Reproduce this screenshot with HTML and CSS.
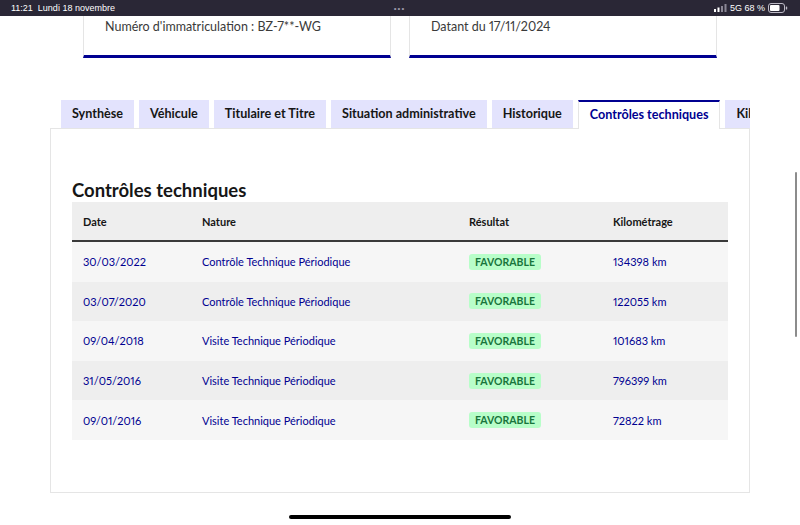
FILE: index.html
```html
<!DOCTYPE html>
<html lang="fr">
<head>
    <meta charset="UTF-8">
    <title>Contrôles techniques</title>
    <link rel="stylesheet" href="styles.css">
</head>
<body>
    <div class="status-bar">
        <div class="status-left">11:21&nbsp;&nbsp;Lundi 18 novembre</div>
        <div class="status-dots">•••</div>
        <div class="status-right">
            <svg width="13" height="8" viewBox="0 0 13 8">
                <rect x="0" y="5" width="2" height="3" fill="#fff"/>
                <rect x="3.5" y="3.5" width="2" height="4.5" fill="#fff"/>
                <rect x="7" y="2" width="2" height="6" fill="#8a8795"/>
                <rect x="10.5" y="0" width="2" height="8" fill="#8a8795"/>
            </svg>
            <span>5G 68 %</span>
            <svg width="20" height="10" viewBox="0 0 20 10">
                <rect x="0.5" y="0.5" width="16" height="9" rx="2.5" fill="none" stroke="#bdbac6"/>
                <rect x="2" y="2" width="9.5" height="6" rx="1" fill="#fff"/>
                <rect x="17.8" y="3.5" width="1.4" height="3" rx="0.6" fill="#bdbac6"/>
            </svg>
        </div>
    </div>

    <div class="summary">
        <div class="summary-card">Numéro d'immatriculation : BZ-7**-WG</div>
        <div class="summary-card">Datant du 17/11/2024</div>
    </div>

    <div class="tabs">
        <div class="tab-list">
            <div class="tab">Synthèse</div>
            <div class="tab">Véhicule</div>
            <div class="tab">Titulaire et Titre</div>
            <div class="tab">Situation administrative</div>
            <div class="tab">Historique</div>
            <div class="tab tab-active">Contrôles techniques</div>
            <div class="tab">Kilométrage</div>
        </div>
        <div class="panel">
            <h2 class="panel-title">Contrôles techniques</h2>
            <table class="ct-table">
                <colgroup>
                    <col style="width:119px">
                    <col style="width:267px">
                    <col style="width:144px">
                    <col>
                </colgroup>
                <thead>
                    <tr><th>Date</th><th>Nature</th><th>Résultat</th><th>Kilométrage</th></tr>
                </thead>
                <tbody>
                    <tr><td>30/03/2022</td><td>Contrôle Technique Périodique</td><td><span class="badge">Favorable</span></td><td>134398 km</td></tr>
                    <tr><td>03/07/2020</td><td>Contrôle Technique Périodique</td><td><span class="badge">Favorable</span></td><td>122055 km</td></tr>
                    <tr><td>09/04/2018</td><td>Visite Technique Périodique</td><td><span class="badge">Favorable</span></td><td>101683 km</td></tr>
                    <tr><td>31/05/2016</td><td>Visite Technique Périodique</td><td><span class="badge">Favorable</span></td><td>796399 km</td></tr>
                    <tr><td>09/01/2016</td><td>Visite Technique Périodique</td><td><span class="badge">Favorable</span></td><td>72822 km</td></tr>
                </tbody>
            </table>
        </div>
    </div>

    <div class="scroll-thumb"></div>
    <div class="home-bar"></div>
</body>
</html>
```

FILE: styles.css
```css
body {
    margin: 0;
    padding: 0;
    background-color: #fff;
    font-family: 'Lato', sans-serif;
    font-variant-numeric: proportional-nums;
    color: #161616;
    width: 800px;
    height: 525px;
    overflow: hidden;
    position: relative;
}

.status-bar {
    height: 16px;
    background-color: #2a2736;
    color: #fff;
    font-family: 'Liberation Sans', Arial, sans-serif;
    font-size: 9px;
    display: flex;
    align-items: center;
    justify-content: space-between;
    padding: 0 12px 0 11px;
}

.status-left {
    width: 200px;
}

.status-dots {
    color: #9c99a8;
    font-size: 8px;
    letter-spacing: 1px;
}

.status-right {
    width: 200px;
    display: flex;
    justify-content: flex-end;
    align-items: center;
    gap: 3px;
}

.summary {
    display: flex;
    gap: 18px;
    padding-left: 83px;
}

.summary-card {
    width: 285px;
    height: 37px;
    border-left: 1px solid #e5e5e5;
    border-right: 1px solid #e5e5e5;
    border-bottom: 3px solid #000091;
    padding: 2px 0 0 21px;
    font-size: 12.5px;
    color: #3a3a3a;
    line-height: 18px;
}

.tabs {
    margin: 42px 0 0 50px;
    width: 700px;
}

.tab-list {
    display: flex;
    gap: 5px;
    padding-left: 11px;
    overflow: hidden;
    height: 29px;
    margin-bottom: -1px;
    position: relative;
}

.tab {
    flex: none;
    background-color: #e3e3fd;
    height: 28px;
    line-height: 28px;
    padding: 0 11px;
    font-size: 12.6px;
    font-weight: 700;
    white-space: nowrap;
}

.tab-active {
    background-color: #fff;
    color: #000091;
    border-top: 2px solid #000091;
    border-left: 1px solid #e5e5e5;
    border-right: 1px solid #e5e5e5;
    height: 27px;
    line-height: 26px;
    padding: 0 11px;
}

.panel {
    border: 1px solid #e5e5e5;
    padding: 49px 21px 52px 21px;
}

.panel-title {
    margin: 0;
    font-size: 18.5px;
    line-height: 24px;
    font-weight: 700;
}

.ct-table {
    width: 656px;
    border-collapse: collapse;
    table-layout: fixed;
    font-size: 11px;
}

.ct-table th {
    text-align: left;
    font-weight: 700;
    background-color: #eeeeee;
    height: 38px;
    padding: 0 11px;
    border-bottom: 2px solid #3a3a3a;
}

.ct-table td {
    height: 39.6px;
    padding: 0 11px;
    color: #000091;
}

.ct-table tbody tr:nth-child(odd) {
    background-color: #f6f6f6;
}

.ct-table tbody tr:nth-child(even) {
    background-color: #eeeeee;
}

.badge {
    display: inline-block;
    background-color: #b8fec9;
    color: #18753c;
    text-transform: uppercase;
    font-weight: 700;
    font-size: 10.5px;
    line-height: 16px;
    padding: 0 6px;
    border-radius: 3px;
}

.scroll-thumb {
    position: absolute;
    left: 795px;
    top: 172px;
    width: 2px;
    height: 165px;
    background-color: #8c8c8c;
    border-radius: 1px;
}

.home-bar {
    position: absolute;
    left: 289px;
    top: 515px;
    width: 222px;
    height: 4px;
    border-radius: 2px;
    background-color: #000;
}
```
